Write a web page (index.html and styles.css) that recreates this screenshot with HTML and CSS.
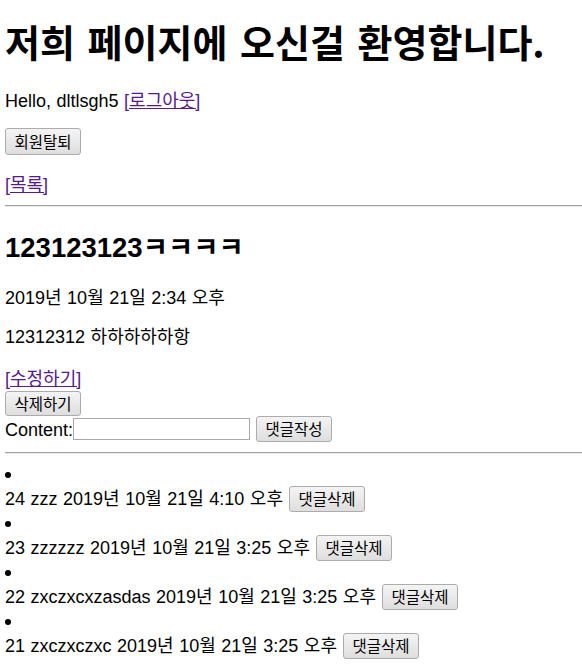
FILE: index.html
```html
<!DOCTYPE html>
<html lang="ko">
<head>
<meta charset="utf-8">
<title>게시글</title>
<link rel="stylesheet" href="styles.css">
</head>
<body>
<h1 class="title">저희 페이지에 오신걸 환영합니다.</h1>
<p class="para greeting">Hello, dltlsgh5 <a class="link" href="#">[로그아웃]</a></p>
<form class="btn-row"><button class="btn" type="button">회원탈퇴</button></form>
<p class="para nav-para"><a class="link" href="#">[목록]</a></p>
<hr class="rule rule-top">
<h2 class="post-title">123123123ㅋㅋㅋㅋ</h2>
<p class="para">2019년 10월 21일 2:34 오후</p>
<p class="para">12312312 하하하하하항</p>
<div class="edit-line"><a class="link" href="#">[수정하기]</a></div>
<form class="del-form"><button class="btn btn-del" type="button">삭제하기</button></form>
<form class="comment-form"><label class="comment-label" for="content">Content:</label><input class="comment-input" id="content" type="text"><button class="btn btn-write" type="button">댓글작성</button></form>
<hr class="rule rule-bottom">
<ul class="comments">
  <li class="comment"><form class="comment-row"><span class="comment-text">24 zzz 2019년 10월 21일 4:10 오후</span><button class="btn" type="button">댓글삭제</button></form></li>
  <li class="comment"><form class="comment-row"><span class="comment-text">23 zzzzzz 2019년 10월 21일 3:25 오후</span><button class="btn" type="button">댓글삭제</button></form></li>
  <li class="comment"><form class="comment-row"><span class="comment-text">22 zxczxcxzasdas 2019년 10월 21일 3:25 오후</span><button class="btn" type="button">댓글삭제</button></form></li>
  <li class="comment"><form class="comment-row"><span class="comment-text">21 zxczxczxc 2019년 10월 21일 3:25 오후</span><button class="btn" type="button">댓글삭제</button></form></li>
</ul>
</body>
</html>
```

FILE: styles.css
```css
html, body {
  background: #ffffff;
}

body {
  margin: 0;
  padding: 0 0 0 5px;
  color: #000000;
  font-family: "Liberation Sans", "Noto Sans CJK KR", sans-serif;
  font-size: 18px;
  line-height: 22px;
  word-spacing: 0.5px;
}

.title {
  margin: 17.6px 0 26.2px;
  font-family: "Noto Sans CJK KR", "Liberation Sans", sans-serif;
  font-size: 38px;
  line-height: 46px;
  font-weight: bold;
  word-spacing: 2px;
}

.para {
  margin: 17.6px 0;
  line-height: 22px;
}

.greeting {
  margin-bottom: 16.2px;
}

.nav-para {
  margin-bottom: 9px;
}

.link {
  color: #551a8b;
  text-decoration: underline;
}

.btn-row {
  display: flex;
  align-items: center;
  height: 27px;
  margin: 16.2px 0 19px;
}

.btn {
  box-sizing: border-box;
  height: 26px;
  padding: 0 8.5px;
  margin: 0;
  border: 1px solid #acacac;
  border-radius: 3px;
  background: linear-gradient(#f4f4f4, #dedede);
  color: #000000;
  font-family: "Noto Sans CJK KR", "Liberation Sans", sans-serif;
  font-size: 15.5px;
  line-height: 1;
  word-spacing: 0;
}

.btn-row .btn {
  height: 27px;
}

.rule {
  height: 0;
  border: 0;
  border-top: 1px solid #a0a0a0;
  border-bottom: 1px solid #ececec;
}

.rule-top {
  margin: 9px 0 0;
}

.post-title {
  margin: 24px 0 21.8px;
  font-size: 27.5px;
  line-height: 34px;
  font-weight: bold;
}

.edit-line {
  margin-top: 19.7px;
  line-height: 22px;
}

.del-form {
  display: flex;
  margin-top: 0.9px;
  height: 25px;
}

.btn-del {
  height: 25px;
}

.comment-form {
  display: flex;
  align-items: center;
  height: 26px;
}

.comment-label {
  align-self: flex-start;
  margin-top: 2.8px;
  line-height: 22px;
}

.comment-input {
  box-sizing: border-box;
  width: 177px;
  height: 22px;
  margin: 0;
  padding: 1px 2px;
  border: 1px solid #a9a9a9;
  background: #ffffff;
  font-family: "Liberation Sans", sans-serif;
  font-size: 14px;
}

.btn-write {
  margin-left: 6px;
}

.rule-bottom {
  margin: 10px 0 0;
}

.comments {
  list-style: none;
  margin: 18.5px 0 0;
  padding: 0;
}

.comment::before {
  content: "";
  display: block;
  width: 6px;
  height: 6px;
  border-radius: 50%;
  background: #000000;
  margin: 9px 0 7px;
}

.comment-row {
  display: flex;
  align-items: center;
  gap: 6px;
  height: 27px;
}

.comment-text {
  line-height: 22px;
  white-space: nowrap;
}
```
